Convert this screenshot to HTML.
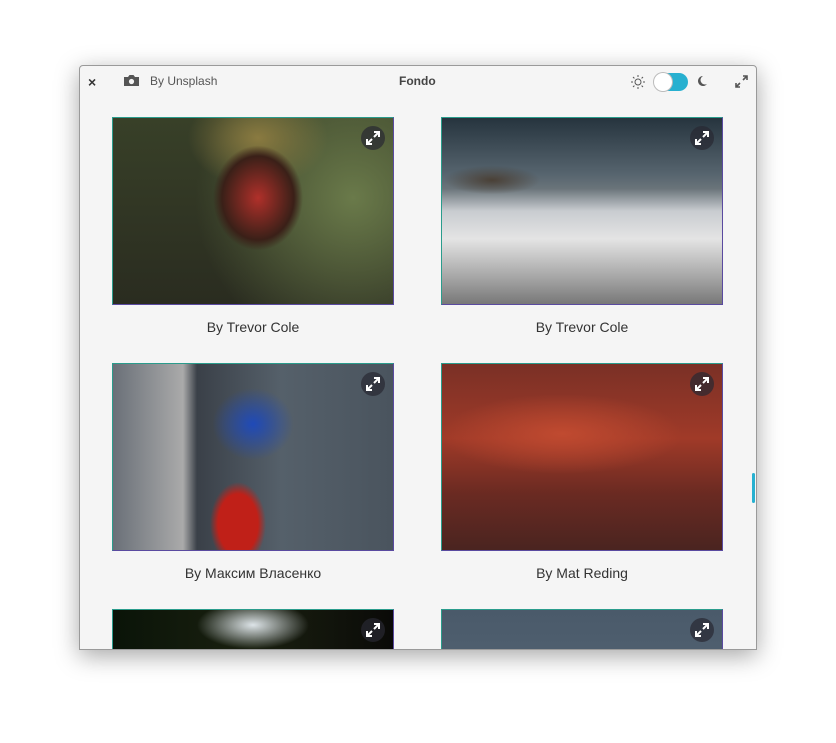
<!DOCTYPE html>
<html><head><style>
body{margin:0;width:836px;height:743px;background:#fff;position:relative;overflow:hidden;font-family:"Liberation Sans","DejaVu Sans",sans-serif}
.win{position:absolute;left:79px;top:65px;width:678px;height:585px;background:#f5f5f5;border:1px solid #9a9a9a;border-radius:4px 4px 0 0;box-shadow:0 6px 24px rgba(0,0,0,.35);overflow:hidden;box-sizing:border-box}
.t{position:absolute;font-size:12px;color:#555}
.card{position:absolute;width:282px;height:188px;box-sizing:border-box;border:1px solid #5a4aa0;border-left-color:#2a9c8c;border-top-color:#2a9c8c}
.ex{position:absolute;right:8px;top:8px;width:24px;height:24px;border-radius:50%;background:rgba(40,40,50,.7)}
.ex svg{position:absolute;left:5px;top:5px}
.cap{position:absolute;width:282px;text-align:center;font-size:14px;color:#333}
</style></head><body>
<div class="win">
<div class="t" style="left:8px;top:8px;font-size:14px;color:#333;font-weight:bold">×</div>
<svg style="position:absolute;left:43px;top:8px" width="17" height="13" viewBox="0 0 17 13"><path d="M1 3h4l1.5-2h4L12 3h4v9H1z" fill="#555"/><circle cx="8.5" cy="7.5" r="2.6" fill="#f5f5f5"/></svg>
<div class="t" style="left:70px;top:8px">By Unsplash</div>
<div class="t" style="left:319px;top:8px;font-weight:bold;color:#444">Fondo</div>
<svg style="position:absolute;left:551px;top:9px" width="14" height="14" viewBox="0 0 14 14"><circle cx="7" cy="7" r="3" fill="none" stroke="#555"/><path d="M7 0v2M7 12v2M0 7h2M12 7h2M2 2l1.4 1.4M10.6 10.6L12 12M2 12l1.4-1.4M10.6 3.4L12 2" stroke="#555"/></svg>
<div style="position:absolute;left:574px;top:7px;width:34px;height:18px;border-radius:9px;background:#27b0d0"></div>
<div style="position:absolute;left:574px;top:7px;width:18px;height:18px;border-radius:50%;background:#fff;box-shadow:0 0 0 1px #bbb"></div>
<svg style="position:absolute;left:616px;top:9px" width="12" height="12" viewBox="0 0 12 12"><path d="M7 1A5 5 0 1 0 11 9 4 4 0 0 1 7 1z" fill="#555"/></svg>
<svg style="position:absolute;left:655px;top:9px" width="13" height="13" viewBox="0 0 13 13"><path d="M8 1h4v4M12 1L8 5M5 12H1V8M1 12l4-4" stroke="#555" stroke-width="1.6" fill="none"/></svg>

<div class="card" style="left:32px;top:51px;background:radial-gradient(ellipse 60px 70px at 145px 80px,#b0302a 0%,#3a2018 60%,transparent 75%),radial-gradient(ellipse 70px 50px at 145px 20px,#8a7a40,transparent),radial-gradient(circle at 240px 80px,#6a7a4a,transparent 60%),linear-gradient(#384028,#2a2c20)"><div class="ex"><svg width="14" height="14" viewBox="0 0 14 14"><path d="M8 1h5v5M13 1L8 6M6 13H1V8M1 13l5-5" stroke="#fff" stroke-width="2" fill="none"/></svg></div></div>
<div class="cap" style="left:32px;top:253px">By Trevor Cole</div>

<div class="card" style="left:361px;top:51px;background:radial-gradient(ellipse 60px 18px at 50px 62px,#4a4036,transparent 80%),linear-gradient(#26343e 0%,#56646e 30%,#6a747a 38%,#c8ccd0 50%,#e4e4e4 65%,#a8a8a8 85%,#787878 100%)"><div class="ex"><svg width="14" height="14" viewBox="0 0 14 14"><path d="M8 1h5v5M13 1L8 6M6 13H1V8M1 13l5-5" stroke="#fff" stroke-width="2" fill="none"/></svg></div></div>
<div class="cap" style="left:361px;top:253px">By Trevor Cole</div>

<div class="card" style="left:32px;top:297px;background:radial-gradient(ellipse 45px 40px at 140px 60px,#1f4ab8,transparent 90%),radial-gradient(ellipse 40px 60px at 125px 160px,#c02018,#c02018 50%,transparent 70%),linear-gradient(90deg,#6a7078 0%,#aaa 25%,#3a4048 30%,#55606a 60%,#4a545e 100%)"><div class="ex"><svg width="14" height="14" viewBox="0 0 14 14"><path d="M8 1h5v5M13 1L8 6M6 13H1V8M1 13l5-5" stroke="#fff" stroke-width="2" fill="none"/></svg></div></div>
<div class="cap" style="left:32px;top:499px">By Максим Власенко</div>

<div class="card" style="left:361px;top:297px;background:radial-gradient(ellipse 120px 40px at 120px 70px,#c04a30,transparent),linear-gradient(#7a3026,#a03a28 40%,#6a2a22 70%,#4a2420)"><div class="ex"><svg width="14" height="14" viewBox="0 0 14 14"><path d="M8 1h5v5M13 1L8 6M6 13H1V8M1 13l5-5" stroke="#fff" stroke-width="2" fill="none"/></svg></div></div>
<div class="cap" style="left:361px;top:499px">By Mat Reding</div>

<div class="card" style="left:32px;top:543px;background:radial-gradient(ellipse 70px 30px at 140px 15px,#dde4e8,transparent 80%),linear-gradient(90deg,#0a1408,#1a2010 50%,#0a0a08)"><div class="ex"><svg width="14" height="14" viewBox="0 0 14 14"><path d="M8 1h5v5M13 1L8 6M6 13H1V8M1 13l5-5" stroke="#fff" stroke-width="2" fill="none"/></svg></div></div>
<div class="card" style="left:361px;top:543px;background:linear-gradient(#4a5a6a,#5e6e7e)"><div class="ex"><svg width="14" height="14" viewBox="0 0 14 14"><path d="M8 1h5v5M13 1L8 6M6 13H1V8M1 13l5-5" stroke="#fff" stroke-width="2" fill="none"/></svg></div></div>

<div style="position:absolute;left:672px;top:407px;width:3px;height:30px;background:#27b0d0;border-radius:2px"></div>
</div>
</body></html>
